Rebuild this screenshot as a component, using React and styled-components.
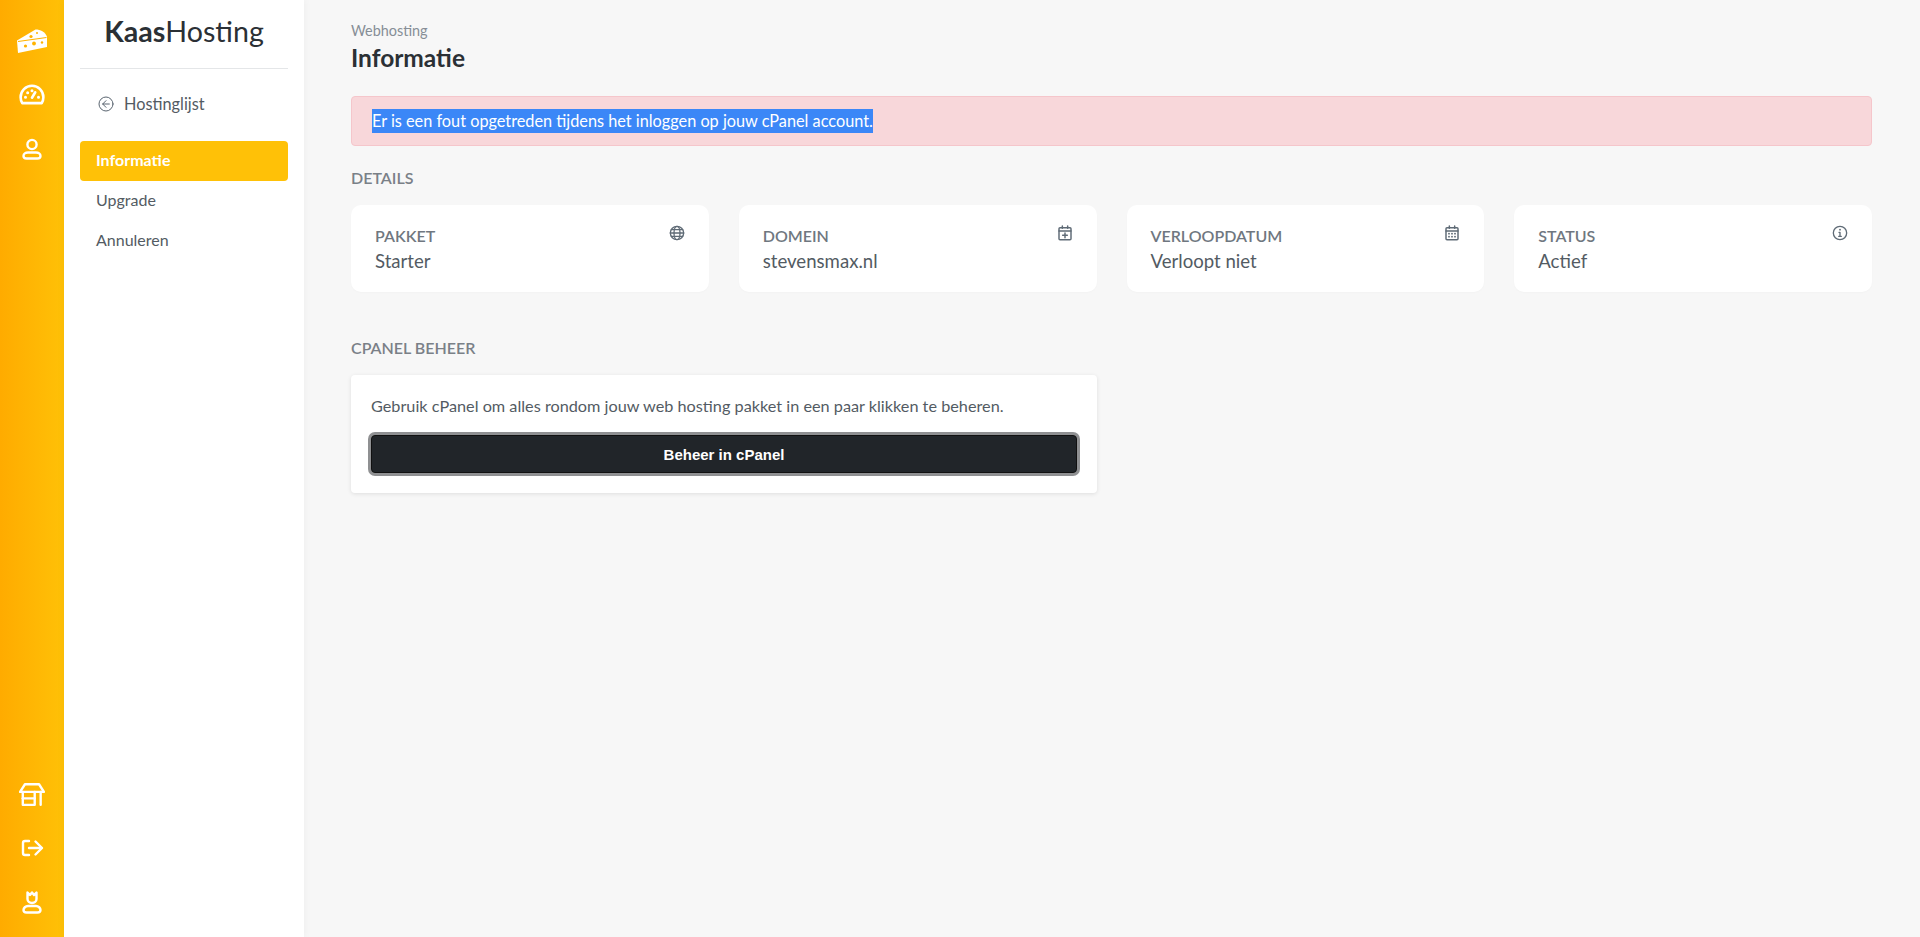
import React from "react";
import styled, { createGlobalStyle } from "styled-components";

const GlobalStyle = createGlobalStyle`
  * { box-sizing: border-box; }
  html, body { margin: 0; height: 100%; }
  body {
    background: #f7f7f7;
    color: #495057;
    font-family: "Lato", "Open Sans", sans-serif;
  }
`;

const IconSvg = ({ size = 24, sw = 2.4, children }) => (
  <svg width={size} height={size} viewBox="0 0 24 24" fill="none" stroke="currentColor" strokeWidth={sw} strokeLinecap="round" strokeLinejoin="round">
    {children}
  </svg>
);

const CheeseIcon = () => (
  <svg width="32" height="26" viewBox="0 0 32 26" fill="none">
    <path d="M1 12.5 L19.5 1.5 C24.5 1.5 29 4 31 8.5 L31 19 L2 25 Z" fill="#fff" />
    <path d="M2 13.5 L30.5 9.5" stroke="#ffb300" strokeWidth="1.2" />
    <path d="M3.5 15.5 L3.8 22.6 L29.2 17.4 L29.2 12" stroke="#fff" strokeWidth="1" />
    <circle cx="9.5" cy="18" r="1.6" fill="#ffb300" />
    <circle cx="18" cy="15.5" r="1.9" fill="#ffb300" />
    <circle cx="26" cy="14.5" r="1.2" fill="#ffb300" />
    <circle cx="15" cy="8.5" r="1.6" fill="#ffb300" />
    <circle cx="21" cy="5" r="1" fill="#ffb300" />
  </svg>
);

const GaugeIcon = () => (
  <IconSvg size={26}>
    <path d="M3 19.5 C2 17.8 1.5 15.8 1.5 14 A10.5 10.5 0 0 1 22.5 14 C22.5 15.8 22 17.8 21 19.5 Z" />
    <path d="M12 14.5 L15 9.5" />
    <path d="M6 14h.01M8 10h.01M12 8h.01M18 14h.01" strokeWidth="2.8" />
  </IconSvg>
);

const UserIcon = () => (
  <IconSvg size={24}>
    <circle cx="12" cy="7.5" r="4.6" />
    <path d="M6.5 21.5 H17.5 C19.5 21.5 20.5 20.3 20.5 19 C20.5 17 18.5 15.5 16 15.5 H8 C5.5 15.5 3.5 17 3.5 19 C3.5 20.3 4.5 21.5 6.5 21.5 Z" />
  </IconSvg>
);

const StoreIcon = () => (
  <IconSvg size={26} sw={2.2}>
    <path d="M5.5 3 H18.5 L23 10 H1 Z" />
    <path d="M3.5 10 V22 H14.5 V10" />
    <path d="M3.5 16 H14.5" />
    <path d="M20 10 V22" />
  </IconSvg>
);

const LogoutIcon = () => (
  <IconSvg size={24}>
    <path d="M9 5 H5 C3.8 5 3 5.8 3 7 V17 C3 18.2 3.8 19 5 19 H9" />
    <path d="M9 12 H21.5" />
    <path d="M15.5 5.5 L22 12 L15.5 18.5" />
  </IconSvg>
);

const AdminIcon = () => (
  <IconSvg size={24}>
    <path d="M7.5 2.5 L10 5 L12 2.5 L14 5 L16.5 2.5 V9 C16.5 11.5 14.5 13 12 13 C9.5 13 7.5 11.5 7.5 9 Z" />
    <path d="M6.5 22.5 H17.5 C19.5 22.5 20.5 21.3 20.5 20 C20.5 18 18.5 16 16 16 H8 C5.5 16 3.5 18 3.5 20 C3.5 21.3 4.5 22.5 6.5 22.5 Z" />
  </IconSvg>
);

const BackIcon = () => (
  <IconSvg size={16} sw={1.5}>
    <circle cx="12" cy="12" r="10.5" />
    <path d="M12 7 L7 12 L12 17" />
    <path d="M7 12 H17" />
  </IconSvg>
);

const GlobeIcon = () => (
  <IconSvg size={16} sw={2}>
    <circle cx="12" cy="12" r="10" />
    <path d="M2 12 H22 M3.5 7 H20.5 M3.5 17 H20.5" />
    <ellipse cx="12" cy="12" rx="4.5" ry="10" />
  </IconSvg>
);

const CalendarPlusIcon = () => (
  <IconSvg size={16} sw={2.2}>
    <rect x="3" y="4" width="18" height="18" rx="1.5" />
    <path d="M3 9 H21 M8 1.5 V5 M16 1.5 V5" />
    <path d="M12 12 V19 M8.5 15.5 H15.5" />
  </IconSvg>
);

const CalendarIcon = () => (
  <IconSvg size={16} sw={2.2}>
    <rect x="3" y="4" width="18" height="18" rx="1.5" />
    <path d="M3 9 H21 M8 1.5 V5 M16 1.5 V5" />
    <path d="M7.5 13h.01M12 13h.01M16.5 13h.01M7.5 17.5h.01M12 17.5h.01M16.5 17.5h.01" strokeWidth="2.8" />
  </IconSvg>
);

const InfoIcon = () => (
  <IconSvg size={16} sw={2}>
    <circle cx="12" cy="12" r="10" />
    <path d="M12 11 V17 M10 17 H14 M10.5 11 H12" />
    <path d="M12 7h.01" strokeWidth="2.8" />
  </IconSvg>
);

const details = [
  { label: "PAKKET", value: "Starter", icon: <GlobeIcon /> },
  { label: "DOMEIN", value: "stevensmax.nl", icon: <CalendarPlusIcon /> },
  { label: "VERLOOPDATUM", value: "Verloopt niet", icon: <CalendarIcon /> },
  { label: "STATUS", value: "Actief", icon: <InfoIcon /> },
];

const App = () => (
  <Shell>
    <GlobalStyle />
    <Rail>
      <RailGroup>
        <RailItem><CheeseIcon /></RailItem>
        <RailItem><GaugeIcon /></RailItem>
        <RailItem><UserIcon /></RailItem>
      </RailGroup>
      <RailGroup>
        <RailItem><StoreIcon /></RailItem>
        <RailItem><LogoutIcon /></RailItem>
        <RailItem><AdminIcon /></RailItem>
      </RailGroup>
    </Rail>
    <Sidebar>
      <Logo><b>Kaas</b>Hosting</Logo>
      <BackLink><BackIcon />Hostinglijst</BackLink>
      <Nav>
        <NavItem $active>Informatie</NavItem>
        <NavItem>Upgrade</NavItem>
        <NavItem>Annuleren</NavItem>
      </Nav>
    </Sidebar>
    <Main>
      <Crumb>Webhosting</Crumb>
      <Title>Informatie</Title>
      <Alert><Selected>Er is een fout opgetreden tijdens het inloggen op jouw cPanel account.</Selected></Alert>
      <SectionTitle>DETAILS</SectionTitle>
      <CardRow>
        {details.map((item) => (
          <DetailCard key={item.label}>
            <div>
              <DetailLabel>{item.label}</DetailLabel>
              <DetailValue>{item.value}</DetailValue>
            </div>
            <DetailIcon>{item.icon}</DetailIcon>
          </DetailCard>
        ))}
      </CardRow>
      <SectionTitle $top={46}>CPANEL BEHEER</SectionTitle>
      <PanelCard>
        <PanelText>Gebruik cPanel om alles rondom jouw web hosting pakket in een paar klikken te beheren.</PanelText>
        <PanelButton>Beheer in cPanel</PanelButton>
      </PanelCard>
    </Main>
  </Shell>
);

const Shell = styled.div`
  display: flex;
  height: 937px;
  overflow: hidden;
`;
const Rail = styled.aside`
  flex: 0 0 64px;
  display: flex;
  flex-direction: column;
  justify-content: space-between;
  padding: 14px 0 8px;
  background: linear-gradient(90deg, #ffab00, #ffc107);
  color: #fff;
`;
const RailGroup = styled.div`
  display: flex;
  flex-direction: column;
`;
const RailItem = styled.div`
  display: flex;
  align-items: center;
  justify-content: center;
  height: 54px;
`;
const Sidebar = styled.nav`
  flex: 0 0 240px;
  padding: 0 16px;
  background: #fff;
  box-shadow: 0 0 8px rgba(0, 0, 0, 0.05);
`;
const Logo = styled.div`
  height: 69px;
  padding-top: 13px;
  border-bottom: 1px solid #e4e6e8;
  color: #2b3035;
  font-size: 28.6px;
  line-height: 36px;
  text-align: center;
  b { font-weight: 700; }
`;
const BackLink = styled.div`
  display: flex;
  align-items: center;
  gap: 10px;
  height: 72px;
  padding: 0 0 3px 18px;
  font-size: 16.3px;
  color: #535b63;
  svg { color: #5a6570; }
`;
const Nav = styled.div`
  display: flex;
  flex-direction: column;
`;
const NavItem = styled.div`
  display: flex;
  align-items: center;
  height: 40px;
  padding: 0 0 3px 16px;
  border-radius: 4px;
  font-size: 16px;
  font-weight: ${(p) => (p.$active ? 700 : 400)};
  color: ${(p) => (p.$active ? "#fff" : "#535b63")};
  background: ${(p) => (p.$active ? "#ffc107" : "transparent")};
`;
const Main = styled.main`
  flex: 1;
  padding: 22px 48px 0 47px;
`;
const Crumb = styled.div`
  font-size: 14.4px;
  line-height: 18px;
  color: #868e96;
`;
const Title = styled.h1`
  margin: 2px 0 0;
  font-size: 24.5px;
  line-height: 32px;
  font-weight: 700;
  color: #2b3035;
`;
const Alert = styled.div`
  margin-top: 22px;
  height: 50px;
  padding: 12px 20px;
  border: 1px solid #f5c6cb;
  border-radius: 4px;
  background: #f8d7da;
  font-size: 16.28px;
  line-height: 24px;
`;
const Selected = styled.span`
  display: inline-block;
  background: #3b87f7;
  color: #fff;
`;
const SectionTitle = styled.h2`
  margin: ${(p) => p.$top ?? 22}px 0 0;
  font-size: 16px;
  line-height: 20px;
  font-weight: 600;
  color: #7a8087;
`;
const CardRow = styled.div`
  display: grid;
  grid-template-columns: repeat(4, 1fr);
  gap: 30px;
  margin-top: 17px;
`;
const DetailCard = styled.div`
  display: flex;
  justify-content: space-between;
  height: 87px;
  padding: 21px 24px;
  border-radius: 10px;
  background: #fff;
  box-shadow: 0 1px 2px rgba(0, 0, 0, 0.02);
`;
const DetailLabel = styled.div`
  font-size: 16px;
  line-height: 20px;
  font-weight: 600;
  color: #6f7780;
`;
const DetailValue = styled.div`
  margin-top: 2px;
  font-size: 18.6px;
  line-height: 26px;
  color: #535b63;
`;
const DetailIcon = styled.div`
  color: #5f6b76;
  margin-top: -1px;
`;
const PanelCard = styled.div`
  width: 746px;
  height: 118px;
  margin-top: 17px;
  padding: 20px;
  border-radius: 4px;
  background: #fff;
  box-shadow: 0 1px 4px rgba(0, 0, 0, 0.1);
`;
const PanelText = styled.p`
  margin: 0;
  font-size: 16.25px;
  line-height: 22px;
  color: #535b63;
`;
const PanelButton = styled.button`
  display: block;
  width: 100%;
  height: 38px;
  margin-top: 18px;
  border: 1px solid #111;
  border-radius: 4px;
  outline: none;
  background: #212529;
  box-shadow: 0 0 0 3px #8f9092;
  color: #fff;
  font-family: "Liberation Sans", Arial, sans-serif;
  font-size: 15px;
  font-weight: 700;
`;

export default App;
